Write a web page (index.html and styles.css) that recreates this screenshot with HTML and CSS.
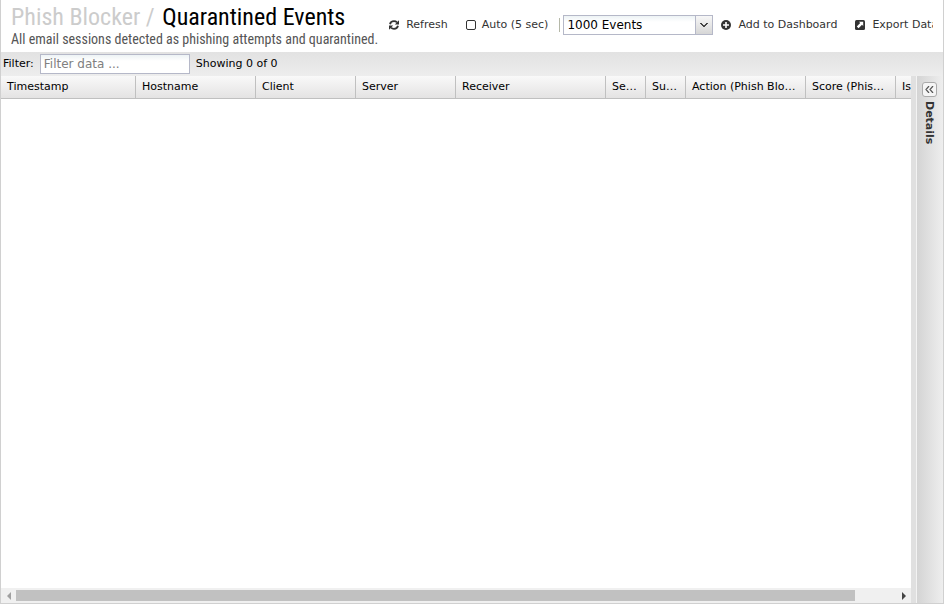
FILE: index.html
```html
<!DOCTYPE html>
<html lang="en">
<head>
<meta charset="utf-8">
<title>Quarantined Events</title>
<link rel="stylesheet" href="styles.css">
</head>
<body>
<div class="panel">
  <header class="header">
    <div class="heading">
      <h1 class="title"><span class="crumb">Phish Blocker /</span> Quarantined Events</h1>
      <p class="subtitle">All email sessions detected as phishing attempts and quarantined.</p>
    </div>
    <div class="tools">
      <button class="tool refresh" type="button">
        <svg class="icon" viewBox="0 0 10 10"><path d="M1 4.200C1.400 2.400 3.100 1.200 5 1.200c1.200 0 2.200.4 3 1.200M9 5.800C8.600 7.600 6.900 8.800 5 8.800c-1.200 0-2.200-.4-3-1.200" fill="none" stroke="currentColor" stroke-width="1.800"/><path d="M10 .2v4.200H5.800zM0 9.800V5.600h4.200z" fill="currentColor"/></svg>
        Refresh</button>
      <label class="tool auto"><input class="check" type="checkbox"> Auto (5 sec)</label>
      <span class="divider"></span>
      <span class="combo">
        <select class="select" aria-label="Event limit"><option>1000 Events</option></select>
        <span class="trigger"><svg class="chevron" viewBox="0 0 10 6"><path d="M1 1h2v1h1v1h2V2h1V1h2v1H8v1H7v1H6v1H4V4H3V3H2V2H1z" fill="#444"/></svg></span>
      </span>
      <button class="tool add" type="button">
        <svg class="icon" viewBox="0 0 10 10"><circle cx="5" cy="5" r="5" fill="currentColor"/><path d="M5 2v6M2 5h6" stroke="#fff" stroke-width="1.600"/></svg>
        Add to Dashboard</button>
      <button class="tool export" type="button">
        <svg class="icon" viewBox="0 0 10 10"><rect width="10" height="10" rx="1.500" fill="currentColor"/><path d="M4 1.800h4.200V6L7 4.800 3.600 8.200 1.800 6.400 5.200 3z" fill="#fff"/></svg>
        Export Data</button>
    </div>
  </header>
  <div class="filterbar">
    <label class="filter-label" for="filter">Filter:</label>
    <input class="filter" id="filter" type="text" placeholder="Filter data ...">
    <span class="showing">Showing 0 of 0</span>
  </div>
  <div class="body">
    <main class="grid">
      <div class="viewport">
        <table class="table">
          <colgroup><col class="c135"><col class="c120"><col class="c100"><col class="c100"><col class="c150"><col class="c40"><col class="c40"><col class="c120"><col class="c90"><col class="c60"></colgroup>
          <thead><tr><th>Timestamp</th><th>Hostname</th><th>Client</th><th>Server</th><th>Receiver</th><th>Sender</th><th>Subject</th><th>Action (Phish Blocker)</th><th>Score (Phish Blocker)</th><th>Is Spam</th></tr></thead>
          <tbody></tbody>
        </table>
      </div>
      <div class="scrollbar">
        <span class="arrow left"></span>
        <span class="track"><span class="thumb"></span></span>
        <span class="arrow right"></span>
      </div>
    </main>
    <div class="splitter"></div>
    <aside class="details">
      <button class="expand" type="button" aria-label="Expand details"><svg class="double" viewBox="0 0 9 7"><path d="M4 0L1 3.500 4 7M8 0L5 3.500 8 7" fill="none" stroke="#555" stroke-width="1.200"/></svg></button>
      <span class="details-title">Details</span>
    </aside>
  </div>
</div>
</body>
</html>
```
FILE: styles.css
```css
* {
  box-sizing: border-box;
}

body {
  margin: 0;
  font: 11px/16px "DejaVu Sans", sans-serif;
  color: #000;
  background: #fff;
}

button,
input,
select {
  font: inherit;
  color: inherit;
}

.panel {
  display: flex;
  flex-direction: column;
  height: 100vh;
  border: solid #d0d0d0;
  border-width: 0 1px 1px;
}

.header {
  display: flex;
  height: 52px;
  padding: 0 10px;
  overflow: hidden;
}

.heading {
  flex: none;
  white-space: nowrap;
  font-family: "Roboto Condensed", "Liberation Sans Narrow", sans-serif;
}

.title {
  margin: 0;
  padding-top: 3px;
  font-size: 24px;
  font-weight: 400;
  line-height: 28px;
}

.crumb {
  margin-right: 2px;
  color: #ccc;
}

.subtitle {
  margin: 0;
  font-size: 14px;
  line-height: 16px;
  color: #555;
}

.tools {
  display: flex;
  flex: 1;
  align-items: center;
  min-width: 0;
  height: 50px;
  padding-left: 11px;
  overflow: hidden;
  white-space: nowrap;
  color: #333;
}

.tool {
  display: flex;
  flex: none;
  align-items: center;
  gap: 7px;
  padding: 0;
  border: 0;
  background: none;
}

.icon {
  width: 10px;
  height: 10px;
}

.auto {
  gap: 6px;
  margin-left: 18px;
}

.check {
  width: 10px;
  height: 10px;
  margin: 0;
  appearance: none;
  border: 1px solid #333;
  border-radius: 2px;
}

.divider {
  flex: none;
  width: 1px;
  height: 14px;
  margin: 0 3px 0 11px;
  background: #b5b8a8;
}

.combo {
  display: flex;
  flex: none;
  width: 150px;
  height: 20px;
  border: 1px solid #b5b8c8;
  color: #000;
}

.select {
  flex: 1;
  min-width: 0;
  padding: 0 3px;
  appearance: none;
  border: 0;
  border-radius: 0;
  font-size: 12px;
  background: linear-gradient(#edf3f5, #fff 6px);
}

.trigger {
  display: flex;
  align-items: center;
  justify-content: center;
  width: 17px;
  border-left: 1px solid #b5b8c8;
  background: linear-gradient(#f7f7f7, #d6d6d6);
}

.chevron {
  width: 10px;
  height: 6px;
}

.add {
  margin-left: 8px;
}

.export {
  margin-left: 18px;
}

.filterbar {
  display: flex;
  flex: none;
  align-items: center;
  height: 24px;
  padding-left: 2px;
  background: linear-gradient(#e2e2e2, #ededed);
}

.filter {
  width: 150px;
  height: 20px;
  margin: 0 6px;
  padding: 0 3px;
  border: 1px solid #b5b8c8;
  border-radius: 0;
  font-size: 12px;
  background: linear-gradient(#edf3f5, #fff 6px);
}

.filter::placeholder {
  color: #808080;
}

.body {
  display: flex;
  flex: 1;
  min-height: 0;
}

.grid {
  display: flex;
  flex: 1;
  flex-direction: column;
  min-width: 0;
}

.viewport {
  flex: 1;
  overflow: hidden;
}

.table {
  width: 955px;
  table-layout: fixed;
  border-collapse: separate;
  border-spacing: 0;
}

.table th {
  height: 23px;
  padding: 0 6px;
  overflow: hidden;
  border: solid #c0c0c0;
  border-width: 0 1px 1px 0;
  font-weight: 400;
  text-align: left;
  text-overflow: ellipsis;
  white-space: nowrap;
  background: linear-gradient(#f9f9f9, #e4e3e3);
}

.c135 { width: 135px; }
.c120 { width: 120px; }
.c100 { width: 100px; }
.c150 { width: 150px; }
.c40 { width: 40px; }
.c90 { width: 90px; }
.c60 { width: 60px; }

.scrollbar {
  display: flex;
  align-items: center;
  height: 15px;
  background: #f0f0f0;
}

.arrow {
  display: flex;
  justify-content: center;
  width: 15px;
}

.arrow::before {
  content: "";
  border: solid transparent;
  border-width: 4px 0;
}

.left::before {
  border-right: 4px solid #a0a0a0;
}

.right::before {
  border-left: 4px solid #444;
}

.track {
  flex: 1;
}

.thumb {
  display: block;
  width: 95.3%;
  height: 11px;
  background: #c1c1c1;
}

.splitter {
  width: 5px;
  background: #e0e0e0;
}

.details {
  display: flex;
  flex-direction: column;
  align-items: center;
  gap: 4px;
  width: 27px;
  padding: 6px 2px 0 0;
  border-left: 1px solid #f3f3f3;
  background: linear-gradient(90deg, #d4d4d4, #eee);
}

.expand {
  display: flex;
  align-items: center;
  justify-content: center;
  width: 15px;
  height: 15px;
  padding: 0;
  border: 1px solid #aaa;
  border-radius: 3px;
  background: #f5f5f5;
}

.double {
  width: 9px;
  height: 7px;
}

.details-title {
  writing-mode: vertical-rl;
  font-weight: 700;
  color: #333;
}
```
